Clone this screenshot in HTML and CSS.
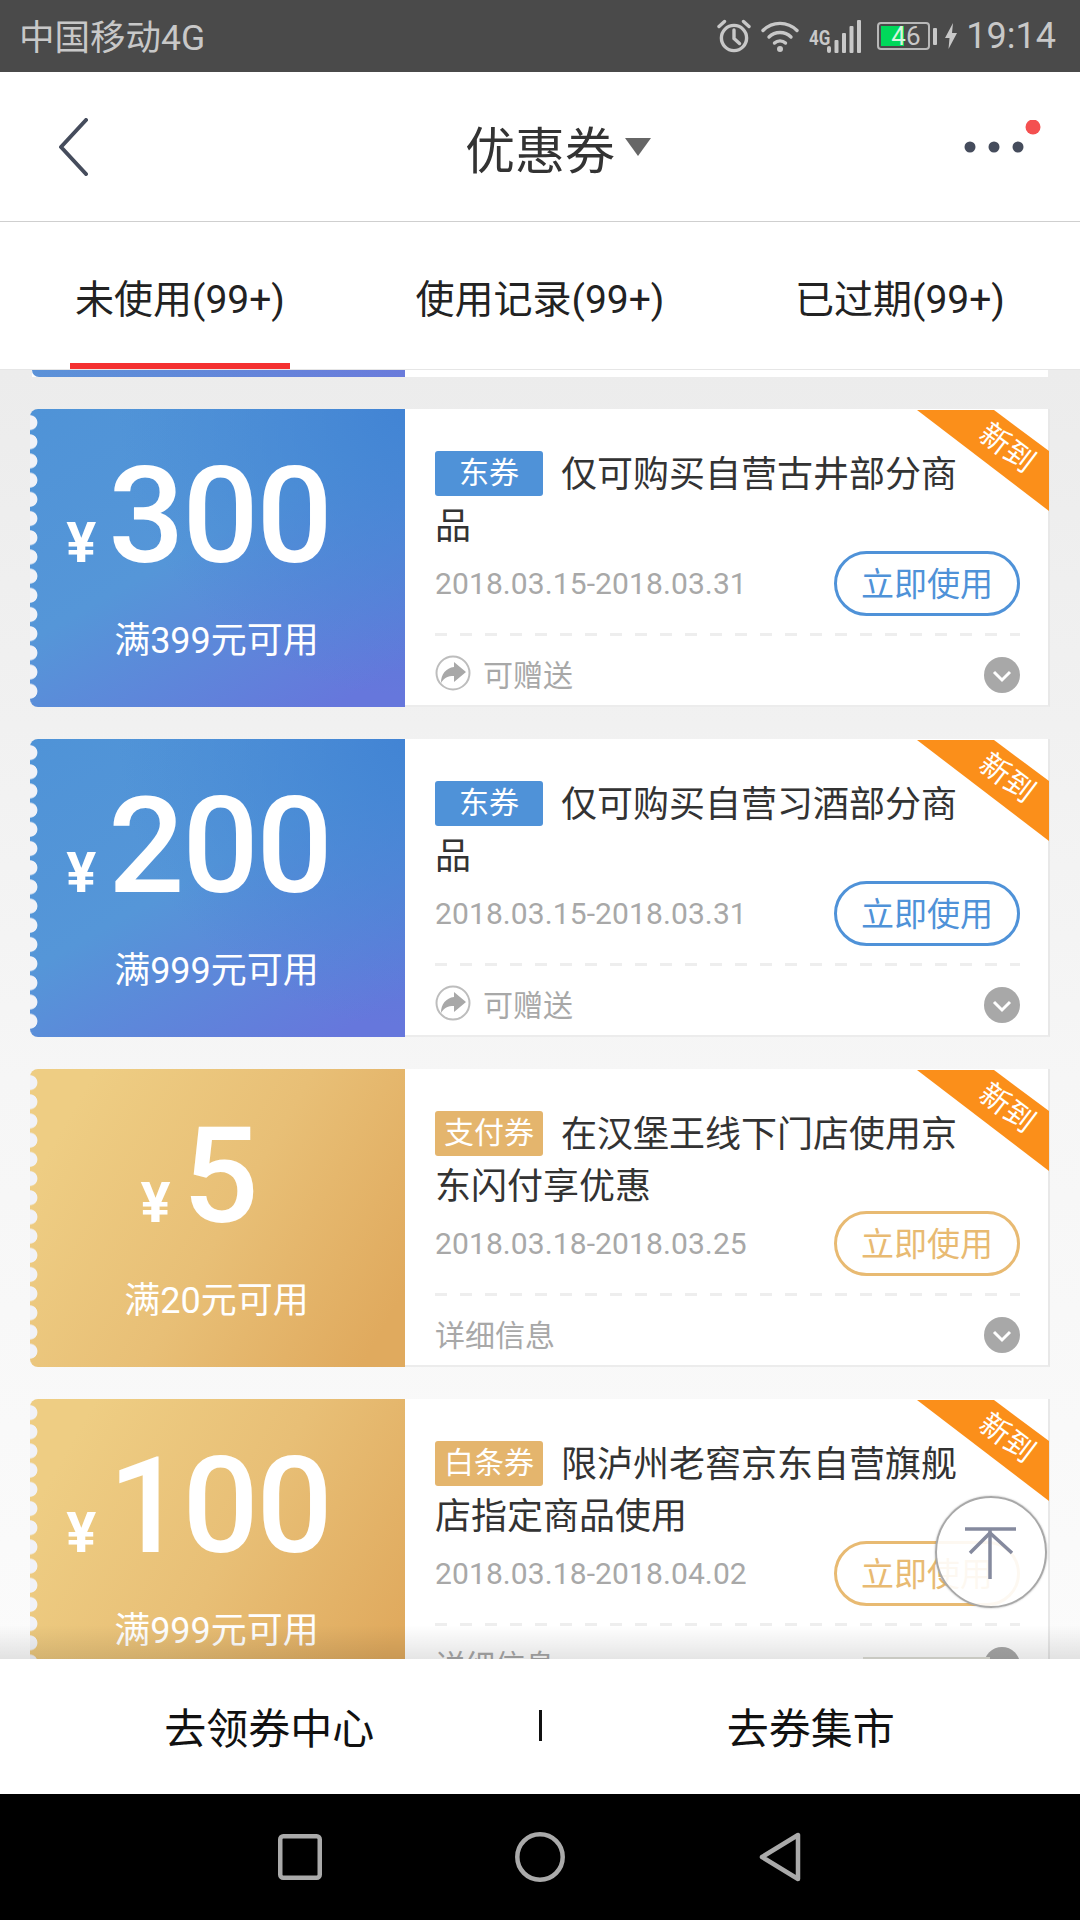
FILE: index.html
```html
<!DOCTYPE html>
<html lang="zh-CN">
<head>
    <meta charset="UTF-8">
    <meta name="viewport" content="width=device-width, initial-scale=1.0">
    <title>优惠券</title>
    <link rel="stylesheet" href="styles.css">
</head>
<body>
    <div class="app">
        <div class="status-bar">
            <span class="carrier">中国移动4G</span>
            <div class="status-icons">
                <svg class="icon-alarm" width="34" height="34" viewBox="0 0 34 34" fill="none" stroke="#c8c8c8" stroke-width="3.4" stroke-linecap="round">
                    <circle cx="17" cy="19" r="12.6"/>
                    <path d="M17 11v8.5l5.5 5"/>
                    <path d="M2 7.5L7.5 2.5M32 7.5L26.5 2.5"/>
                </svg>
                <svg class="icon-wifi" width="38" height="33" viewBox="0 0 38 33" fill="none" stroke="#c8c8c8" stroke-width="3.4" stroke-linecap="round">
                    <path d="M2 10.5C11.5 1 26.5 1 36 10.5"/>
                    <path d="M8 17C14 11 24 11 30 17"/>
                    <path d="M13.5 23C16.5 20.2 21.5 20.2 24.5 23"/>
                    <circle cx="19" cy="29" r="3" fill="#c8c8c8" stroke="none"/>
                </svg>
                <span class="net-type">4G</span>
                <svg class="icon-signal" width="34" height="33" viewBox="0 0 34 33" fill="#c8c8c8">
                    <rect x="0" y="26" width="4" height="7" rx="2"/>
                    <rect x="7.5" y="20" width="4" height="13" rx="1"/>
                    <rect x="15" y="13" width="4" height="20" rx="1"/>
                    <rect x="22.5" y="6" width="4" height="27" rx="1"/>
                    <rect x="30" y="0" width="4" height="33" rx="1"/>
                </svg>
                <div class="battery">
                    <div class="battery-fill"></div>
                    <span class="battery-text"><span class="battery-lit">4</span>6</span>
                </div>
                <div class="battery-nib"></div>
                <svg class="icon-bolt" width="12" height="26" viewBox="0 0 12 26" fill="#c8c8c8">
                    <path d="M8 0L0 15h4.500L3.500 26 12 10H7z"/>
                </svg>
                <span class="clock">19:14</span>
            </div>
        </div>

        <div class="header">
            <svg class="back" width="32" height="58" viewBox="0 0 32 58" fill="none" stroke="#454c5c" stroke-width="4" stroke-linecap="round" stroke-linejoin="round">
                <path d="M28 2L3 29l25 27"/>
            </svg>
            <div class="header-title">
                <span>优惠券</span>
                <span class="title-arrow"></span>
            </div>
            <svg class="more" width="80" height="40" viewBox="0 0 80 40">
                <circle cx="9" cy="27" r="5.500" fill="#454c5c"/>
                <circle cx="33" cy="27" r="5.500" fill="#454c5c"/>
                <circle cx="57" cy="27" r="5.500" fill="#454c5c"/>
                <circle cx="72" cy="7" r="7.500" fill="#f45050"/>
            </svg>
        </div>

        <div class="tabs">
            <div class="tab"><span class="tab-label active">未使用(99+)</span></div>
            <div class="tab"><span class="tab-label">使用记录(99+)</span></div>
            <div class="tab"><span class="tab-label">已过期(99+)</span></div>
        </div>

        <div class="list">
            <div class="peek"><div class="peek-left"></div></div>

            <div class="card">
                <div class="card-left blue">
                    <div class="amount"><span class="yen">¥</span><span class="value">300</span></div>
                    <div class="limit">满399元可用</div>
                </div>
                <div class="card-right">
                    <div class="title"><span class="tag tag-blue">东券</span><span>仅可购买自营古井部分商品</span></div>
                    <div class="date-row">
                        <span class="date">2018.03.15-2018.03.31</span>
                        <span class="use-btn btn-blue">立即使用</span>
                    </div>
                    <div class="dash"></div>
                    <div class="card-foot">
                        <div class="foot-info">
                            <svg class="share" width="36" height="36" viewBox="0 0 36 36">
                                <circle cx="18" cy="18" r="16.500" fill="none" stroke="#bdbdbd" stroke-width="2"/>
                                <path d="M19 7l12 10-12 10v-6c-6 0-10 1.800-13 7 0-9 5-15 13-16z" fill="#a8a8a8"/>
                            </svg>
                            <span>可赠送</span>
                        </div>
                        <svg class="chevron" width="36" height="36" viewBox="0 0 36 36"><circle cx="18" cy="18" r="18" fill="#a8a8a8"/><path d="M10 15l8 8 8-8" fill="none" stroke="#fff" stroke-width="3"/></svg>
                    </div>
                </div>
                <div class="ribbon"><span>新到</span></div>
            </div>

            <div class="card">
                <div class="card-left blue">
                    <div class="amount"><span class="yen">¥</span><span class="value">200</span></div>
                    <div class="limit">满999元可用</div>
                </div>
                <div class="card-right">
                    <div class="title"><span class="tag tag-blue">东券</span><span>仅可购买自营习酒部分商品</span></div>
                    <div class="date-row">
                        <span class="date">2018.03.15-2018.03.31</span>
                        <span class="use-btn btn-blue">立即使用</span>
                    </div>
                    <div class="dash"></div>
                    <div class="card-foot">
                        <div class="foot-info">
                            <svg class="share" width="36" height="36" viewBox="0 0 36 36">
                                <circle cx="18" cy="18" r="16.500" fill="none" stroke="#bdbdbd" stroke-width="2"/>
                                <path d="M19 7l12 10-12 10v-6c-6 0-10 1.800-13 7 0-9 5-15 13-16z" fill="#a8a8a8"/>
                            </svg>
                            <span>可赠送</span>
                        </div>
                        <svg class="chevron" width="36" height="36" viewBox="0 0 36 36"><circle cx="18" cy="18" r="18" fill="#a8a8a8"/><path d="M10 15l8 8 8-8" fill="none" stroke="#fff" stroke-width="3"/></svg>
                    </div>
                </div>
                <div class="ribbon"><span>新到</span></div>
            </div>

            <div class="card">
                <div class="card-left gold">
                    <div class="amount"><span class="yen">¥</span><span class="value">5</span></div>
                    <div class="limit">满20元可用</div>
                </div>
                <div class="card-right">
                    <div class="title"><span class="tag tag-gold">支付券</span><span>在汉堡王线下门店使用京东闪付享优惠</span></div>
                    <div class="date-row">
                        <span class="date">2018.03.18-2018.03.25</span>
                        <span class="use-btn btn-gold">立即使用</span>
                    </div>
                    <div class="dash"></div>
                    <div class="card-foot">
                        <div class="foot-info"><span>详细信息</span></div>
                        <svg class="chevron" width="36" height="36" viewBox="0 0 36 36"><circle cx="18" cy="18" r="18" fill="#a8a8a8"/><path d="M10 15l8 8 8-8" fill="none" stroke="#fff" stroke-width="3"/></svg>
                    </div>
                </div>
                <div class="ribbon"><span>新到</span></div>
            </div>

            <div class="card">
                <div class="card-left gold">
                    <div class="amount"><span class="yen">¥</span><span class="value">100</span></div>
                    <div class="limit">满999元可用</div>
                </div>
                <div class="card-right">
                    <div class="title"><span class="tag tag-gold">白条券</span><span>限泸州老窖京东自营旗舰店指定商品使用</span></div>
                    <div class="date-row">
                        <span class="date">2018.03.18-2018.04.02</span>
                        <span class="use-btn btn-gold">立即使用</span>
                    </div>
                    <div class="dash"></div>
                    <div class="card-foot">
                        <div class="foot-info"><span>详细信息</span></div>
                        <svg class="chevron" width="36" height="36" viewBox="0 0 36 36"><circle cx="18" cy="18" r="18" fill="#a8a8a8"/><path d="M10 15l8 8 8-8" fill="none" stroke="#fff" stroke-width="3"/></svg>
                    </div>
                </div>
                <div class="ribbon"><span>新到</span></div>
            </div>

            <div class="list-fade"></div>
            <div class="to-top">
                <svg width="60" height="60" viewBox="0 0 60 60" fill="none" stroke="#858a9e" stroke-width="3.500">
                    <path d="M4 7h51"/>
                    <path d="M29 7v50"/>
                    <path d="M9 31l20-20 22 20"/>
                </svg>
            </div>
        </div>

        <div class="bottom-bar">
            <div class="bottom-item">去领券中心</div>
            <div class="bottom-divider"></div>
            <div class="bottom-item">去券集市</div>
        </div>

        <div class="nav-bar">
            <div class="nav-slot">
                <svg width="44" height="46" viewBox="0 0 44 46" fill="none" stroke="#aaa" stroke-width="4.500"><rect x="2.250" y="2.250" width="39.500" height="41.500" rx="3"/></svg>
            </div>
            <div class="nav-slot">
                <svg width="50" height="50" viewBox="0 0 50 50" fill="none" stroke="#aaa" stroke-width="4.500"><circle cx="25" cy="25" r="22.700"/></svg>
            </div>
            <div class="nav-slot">
                <svg width="42" height="50" viewBox="0 0 42 50" fill="none" stroke="#aaa" stroke-width="4.500" stroke-linejoin="round"><path d="M39 3v44L3 25z"/></svg>
            </div>
        </div>
    </div>
</body>
</html>
```

FILE: styles.css
```css
* {
    box-sizing: border-box;
}

body {
    margin: 0;
    font-family: Roboto, "Noto Sans CJK SC", sans-serif;
    background-color: #fff;
}

.app {
    display: flex;
    flex-direction: column;
    width: 1080px;
    height: 1920px;
    overflow: hidden;
}

/* status bar */
.status-bar {
    display: flex;
    justify-content: space-between;
    align-items: center;
    flex: 0 0 72px;
    padding: 0 24px 0 19px;
    background-color: #4a4a4a;
    color: #c8c8c8;
}

.carrier {
    margin-top: -4px;
    font-size: 35.5px;
}

.status-icons {
    display: flex;
    align-items: center;
}

.icon-alarm {
    margin-right: 10px;
}

.net-type {
    align-self: flex-start;
    width: 18px;
    margin: 13px 0 0 10px;
    font-size: 20px;
    line-height: 20px;
    font-weight: 700;
    transform: scaleX(.85);
    transform-origin: left center;
}

.icon-signal {
    margin-right: 16px;
}

.battery {
    position: relative;
    display: flex;
    align-items: center;
    width: 53px;
    height: 28px;
    padding-left: 12px;
    border: 2px solid #b8b8b8;
    border-radius: 4px;
}

.battery-fill {
    position: absolute;
    top: 2px;
    left: 2px;
    width: 23px;
    height: 20px;
    background-color: #00d85a;
}

.battery-text {
    position: relative;
    font-size: 26px;
    line-height: 24px;
}

.battery-lit {
    color: #d5f5df;
}

.battery-nib {
    width: 4px;
    height: 17px;
    margin: 0 8px 0 3px;
    border-radius: 1px;
    background-color: #c8c8c8;
}

.icon-bolt {
    margin-right: 9px;
}

.clock {
    font-size: 36px;
}

/* header */
.header {
    display: grid;
    grid-template-columns: 1fr auto 1fr;
    align-items: center;
    flex: 0 0 150px;
    padding: 0 39px;
    background-color: #fff;
    border-bottom: 1px solid #cfcfcf;
}

.back {
    margin-left: 19px;
}

.more {
    justify-self: end;
    margin-bottom: 14px;
}

.header-title {
    display: flex;
    align-items: center;
    padding-left: 36px;
    font-size: 50px;
    color: #333;
}

.title-arrow {
    width: 0;
    height: 0;
    margin-left: 10px;
    border-top: 18px solid #666;
    border-left: 13px solid transparent;
    border-right: 13px solid transparent;
}

/* tabs */
.tabs {
    display: flex;
    flex: 0 0 147px;
    background-color: #fff;
    border-bottom: 1px solid #e6e6e6;
}

.tab {
    display: flex;
    justify-content: center;
    flex: 1;
}

.tab-label {
    display: flex;
    align-items: center;
    height: 147px;
    padding: 6px 5px 0;
    border-bottom: 6px solid transparent;
    font-size: 39px;
    color: #222;
}

.tab-label.active {
    border-bottom-color: #f43030;
}

/* coupon list */
.list {
    position: relative;
    flex: 1;
    min-height: 0;
    overflow: hidden;
    background: linear-gradient(#ececec, #f6f6f6 55%, #fbfbfb);
}

.peek {
    height: 7px;
    margin: 0 32px 32px;
    background-color: #fff;
}

.peek-left {
    width: 373px;
    height: 7px;
    border-bottom-left-radius: 8px;
    background: linear-gradient(90deg, #5b92d8, #6a7bdb);
}

.card {
    position: relative;
    display: flex;
    height: 298px;
    margin: 0 30px 32px;
}

.card-left {
    position: relative;
    flex: 0 0 375px;
    padding-top: 58px;
    border-radius: 8px 0 0 8px;
    color: #fff;
    text-align: center;
}

/* scalloped left edge */
.card-left::before {
    content: "";
    position: absolute;
    top: 4px;
    bottom: 4px;
    left: 0;
    width: 8px;
    background: radial-gradient(circle at 0 50%, #f1f2f7 7px, transparent 7.8px) 0 0 / 8px 19.2px repeat-y;
}

.blue {
    background:
        radial-gradient(circle at 100% 0, #4284d4, rgba(66, 132, 212, 0) 60%),
        linear-gradient(150deg, #4f93d7, #5596d8 45%, #6677dc 92%);
}

.gold {
    background: linear-gradient(120deg, #eecd83 12%, #e8bf76 52%, #e0aa5e 92%);
}

.amount {
    display: flex;
    justify-content: center;
    align-items: baseline;
    height: 100px;
    padding-right: 38px;
}

.yen {
    margin-right: 12px;
    font-size: 56px;
    font-weight: 700;
}

.value {
    font-size: 134px;
    line-height: 100px;
    font-weight: 500;
    letter-spacing: -2px;
}

.limit {
    margin-top: 54px;
    padding-right: 2px;
    font-size: 36px;
    line-height: 40px;
}

.card-right {
    flex: 1;
    display: flex;
    flex-direction: column;
    padding: 40px 28px 0 30px;
    background-color: #fff;
    border-right: 2px solid #e8e8e8;
    border-bottom: 2px solid #ececec;
}

.title {
    height: 104px;
    margin-right: 60px;
    font-size: 36px;
    line-height: 52px;
    color: #333;
}

.tag {
    display: inline-block;
    width: 108px;
    height: 45px;
    margin-top: 2px;
    margin-right: 18px;
    border-radius: 3px;
    font-size: 30px;
    line-height: 43px;
    color: #fff;
    text-align: center;
    vertical-align: top;
}

.tag-blue {
    background-color: #4f92d8;
}

.tag-gold {
    background-color: #e4b56d;
}

.date-row {
    display: flex;
    justify-content: space-between;
    align-items: center;
    margin-top: -2px;
}

.date {
    font-size: 30px;
    letter-spacing: .1px;
    color: #a8a8a8;
}

.use-btn {
    width: 186px;
    height: 65px;
    border: 3px solid;
    border-radius: 33px;
    font-size: 33px;
    line-height: 62px;
    text-align: center;
}

.btn-blue {
    border-color: #4f92d8;
    color: #4f92d8;
}

.btn-gold {
    border-color: #e8ba72;
    color: #e8ba72;
}

.dash {
    height: 3px;
    margin-top: 17px;
    background: repeating-linear-gradient(90deg, #eee 0, #eee 12px, transparent 12px, transparent 25px);
}

.card-foot {
    display: flex;
    justify-content: space-between;
    align-items: center;
    flex: 1;
    padding-top: 7px;
}

.foot-info {
    display: flex;
    align-items: center;
    margin-top: -3px;
    font-size: 30px;
    color: #a8a8a8;
}

.share {
    margin-right: 12px;
}

.chevron {
    margin-top: 2px;
}

.ribbon {
    position: absolute;
    top: 1px;
    right: 1px;
    width: 132px;
    height: 101px;
    background-color: #fb8f1a;
    clip-path: polygon(0 0, 77px 0, 100% 41px, 100% 100%);
}

.ribbon span {
    position: absolute;
    top: 19px;
    left: 60px;
    width: 60px;
    font-size: 30px;
    line-height: 38px;
    color: #fff;
    text-align: center;
    white-space: nowrap;
    transform: rotate(37deg);
}

.list-fade {
    position: absolute;
    left: 0;
    right: 0;
    bottom: 0;
    height: 34px;
    background: linear-gradient(rgba(0, 0, 0, 0), rgba(0, 0, 0, .1));
}

.list-fade::after {
    content: "";
    position: absolute;
    left: 863px;
    bottom: 0;
    width: 127px;
    height: 2px;
    background-color: #c9c9c2;
}

.to-top {
    position: absolute;
    top: 1126px;
    left: 935px;
    display: flex;
    justify-content: center;
    align-items: center;
    width: 112px;
    height: 112px;
    border: 2px solid #a8a8a8;
    border-radius: 50%;
    background-color: rgba(255, 255, 255, .9);
    box-shadow: 0 0 2px rgba(0, 0, 0, .3);
}

/* bottom actions */
.bottom-bar {
    display: flex;
    align-items: center;
    flex: 0 0 135px;
    padding-bottom: 3px;
    background-color: #fff;
}

.bottom-item {
    flex: 1;
    font-size: 42px;
    color: #111;
    text-align: center;
}

.bottom-divider {
    width: 3px;
    height: 31px;
    background-color: #111;
}

/* android nav */
.nav-bar {
    display: flex;
    justify-content: center;
    align-items: center;
    flex: 0 0 126px;
    background-color: #000;
}

.nav-slot {
    display: flex;
    justify-content: center;
    width: 240px;
}
```
